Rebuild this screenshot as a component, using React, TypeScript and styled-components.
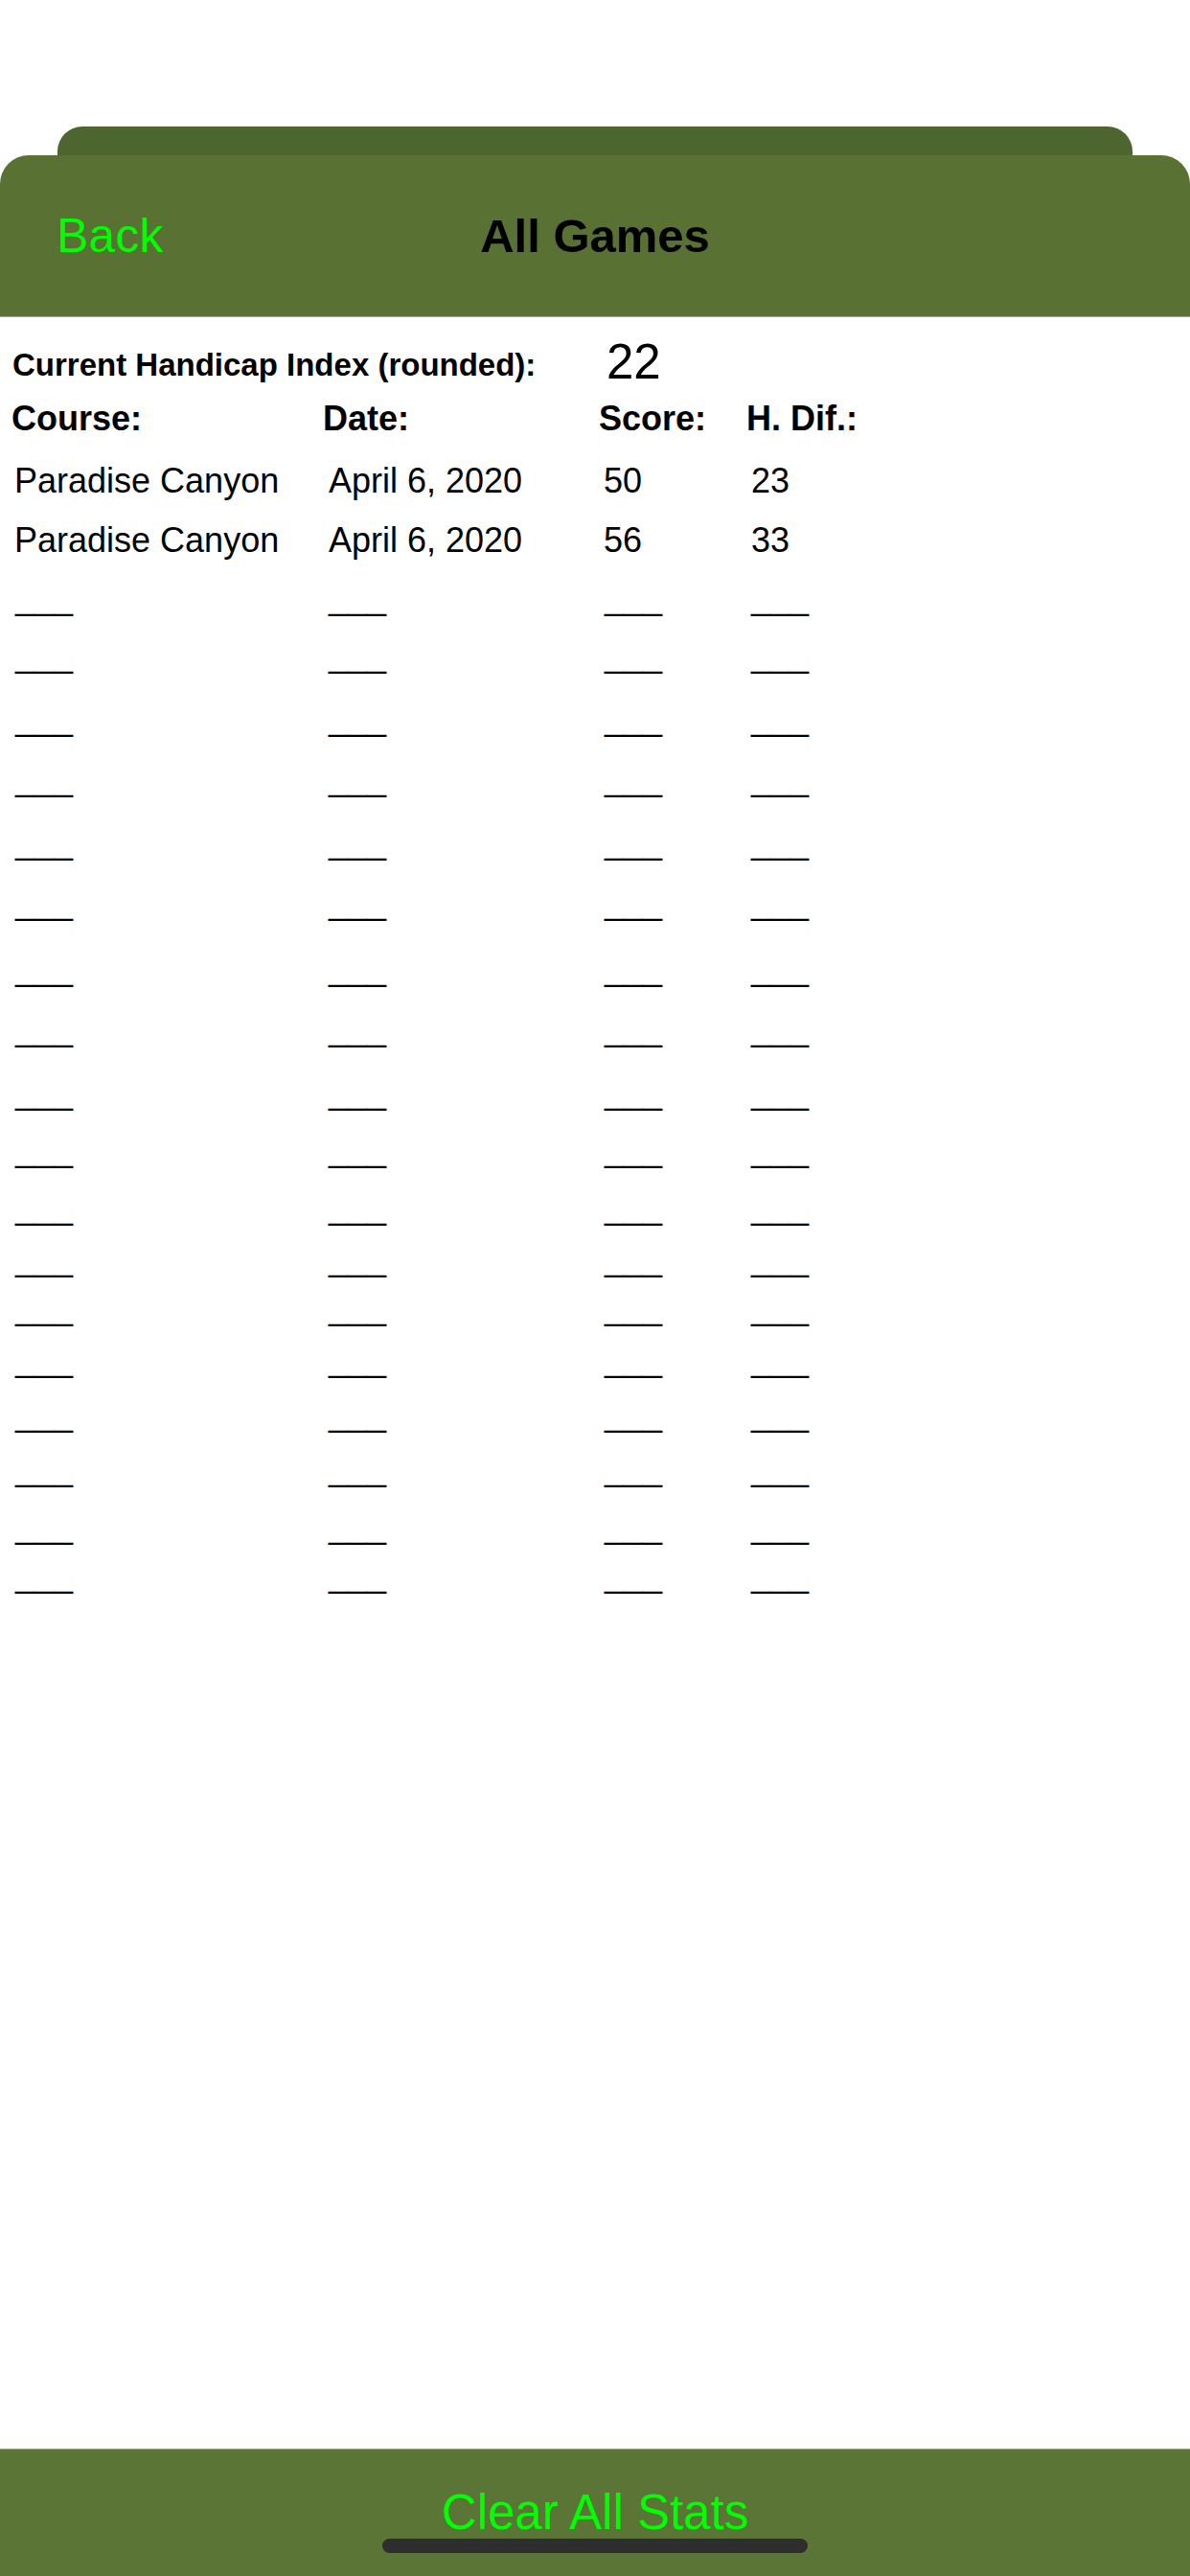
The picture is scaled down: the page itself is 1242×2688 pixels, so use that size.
import React from "react";
import styled, { createGlobalStyle } from "styled-components";

const colors = {
  nav: "#597233",
  navBehind: "#4d652f",
  toolbar: "#5b7537",
  tint: "#00ff00",
  hairline: "#a3a3a3",
  homeIndicator: "#2e2e2e",
};

const GlobalStyle = createGlobalStyle`
  *, *::before, *::after {
    box-sizing: border-box;
  }

  html,
  body {
    margin: 0;
    padding: 0;
    background: #fff;
  }

  body {
    font-family: "Liberation Sans", Arial, Helvetica, sans-serif;
    color: #000;
  }
`;

type Game = {
  course: string;
  date: string;
  score: number;
  diff: number;
};

const games: Game[] = [
  { course: "Paradise Canyon", date: "April 6, 2020", score: 50, diff: 23 },
  { course: "Paradise Canyon", date: "April 6, 2020", score: 56, diff: 33 },
];

// centre lines of the empty "___" slots, measured down the page
const blankLines = [
  642, 702, 768, 831, 897, 960, 1029, 1092, 1158, 1218, 1278, 1332, 1383,
  1437, 1494, 1551, 1611, 1662,
];

const ROW_HEIGHT = 36;

const headerCols = [12, 337, 625, 779];
const gameCols = [15, 343, 630, 784];
const blankCols = [16, 343, 631, 784];

const App = () => {
  return (
    <>
      <GlobalStyle />
      <Screen>
        <CardBehind />
        <Sheet>
          <NavBar>
            <BackButton type="button">Back</BackButton>
            <NavTitle>All Games</NavTitle>
            <span />
          </NavBar>

          <Content>
            <IndexRow>
              <IndexLabel>Current Handicap Index (rounded):</IndexLabel>
              <IndexValue>22</IndexValue>
            </IndexRow>

            <Row $cols={headerCols} $gap={16} $bold>
              <span>Course:</span>
              <span>Date:</span>
              <span>Score:</span>
              <span>H. Dif.:</span>
            </Row>

            {games.map((game, i) => (
              <Row key={i} $cols={gameCols} $gap={i === 0 ? 28.5 : 26}>
                <span>{game.course}</span>
                <span>{game.date}</span>
                <span>{game.score}</span>
                <span>{game.diff}</span>
              </Row>
            ))}

            {blankLines.map((y, i) => (
              <Row
                key={y}
                $cols={blankCols}
                $gap={i === 0 ? 24 : y - blankLines[i - 1] - ROW_HEIGHT}
              >
                <span>___</span>
                <span>___</span>
                <span>___</span>
                <span>___</span>
              </Row>
            ))}
          </Content>

          <Toolbar>
            <ToolbarButton type="button">Clear All Stats</ToolbarButton>
          </Toolbar>
        </Sheet>
        <HomeIndicator />
      </Screen>
    </>
  );
};

export default App;

const Screen = styled.div`
  position: relative;
  width: 1242px;
  height: 2688px;
  padding-top: 132px;
  display: flex;
  flex-direction: column;
  overflow: hidden;
  background: #fff;
`;

const CardBehind = styled.div`
  flex-shrink: 0;
  height: 30px;
  margin: 0 60px;
  background: ${colors.navBehind};
  border-radius: 26px 26px 0 0;
`;

const Sheet = styled.div`
  flex: 1;
  display: flex;
  flex-direction: column;
  background: #fff;
  border-radius: 30px 30px 0 0;
  overflow: hidden;
`;

const NavBar = styled.header`
  flex-shrink: 0;
  height: 169px;
  padding: 0 59px;
  display: grid;
  grid-template-columns: 1fr auto 1fr;
  align-items: center;
  background: ${colors.nav};
  border-bottom: 1px solid ${colors.hairline};
  font-size: 50px;
  line-height: 50px;
`;

const BackButton = styled.button`
  justify-self: start;
  padding: 0;
  border: none;
  background: none;
  font: inherit;
  color: ${colors.tint};
  cursor: pointer;
`;

const NavTitle = styled.h1`
  margin: 0;
  font-size: 49px;
  font-weight: 700;
  color: #000;
`;

const Content = styled.main`
  flex: 1;
  padding-top: 21px;
`;

const IndexRow = styled.div`
  display: grid;
  grid-template-columns: 620px auto;
  align-items: start;
  padding-left: 13px;
`;

const IndexLabel = styled.span`
  padding-top: 12px;
  font-size: 33px;
  line-height: 33px;
  font-weight: 700;
`;

const IndexValue = styled.span`
  font-size: 51px;
  line-height: 51px;
`;

const Row = styled.div<{ $cols: number[]; $gap: number; $bold?: boolean }>`
  display: grid;
  grid-template-columns: ${({ $cols }) =>
    `${$cols[1] - $cols[0]}px ${$cols[2] - $cols[1]}px ${
      $cols[3] - $cols[2]
    }px auto`};
  padding-left: ${({ $cols }) => $cols[0]}px;
  margin-top: ${({ $gap }) => $gap}px;
  height: ${ROW_HEIGHT}px;
  font-size: 36px;
  line-height: ${ROW_HEIGHT}px;
  font-weight: ${({ $bold }) => ($bold ? 700 : 400)};
  white-space: nowrap;
`;

const Toolbar = styled.footer`
  flex-shrink: 0;
  height: 133px;
  padding-top: 41px;
  display: flex;
  justify-content: center;
  align-items: flex-start;
  background: ${colors.toolbar};
  border-top: 1px solid ${colors.hairline};
`;

const ToolbarButton = styled.button`
  padding: 0;
  border: none;
  background: none;
  font-family: inherit;
  font-size: 51px;
  line-height: 50px;
  color: ${colors.tint};
  cursor: pointer;
`;

const HomeIndicator = styled.div`
  position: absolute;
  left: 50%;
  bottom: 24px;
  width: 444px;
  height: 15px;
  transform: translateX(-50%);
  border-radius: 8px;
  background: ${colors.homeIndicator};
`;
